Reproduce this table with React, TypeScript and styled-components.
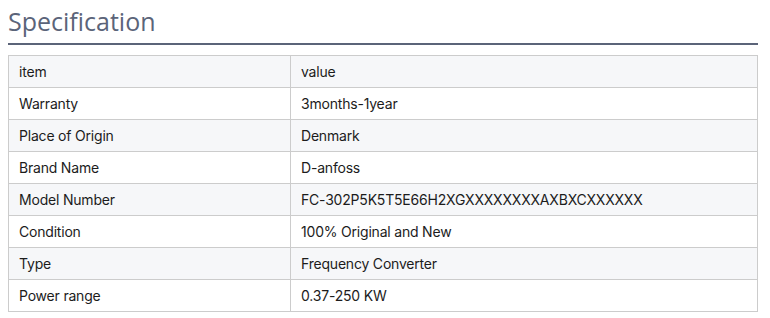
import styled, { createGlobalStyle } from "styled-components"

const rows: [string, string][] = [
  ["item", "value"],
  ["Warranty", "3months-1year"],
  ["Place of Origin", "Denmark"],
  ["Brand Name", "D-anfoss"],
  ["Model Number", "FC-302P5K5T5E66H2XGXXXXXXXXAXBXCXXXXXX"],
  ["Condition", "100% Original and New"],
  ["Type", "Frequency Converter"],
  ["Power range", "0.37-250 KW"],
]

export default function App() {
  return (
    <>
      <GlobalStyle />
      <StyledWrapper>
        <StyledTitle>Specification</StyledTitle>
        <StyledTable>
          <tbody>
            {rows.map(([name, value], i) => (
              <StyledRow key={name} striped={i % 2 === 0}>
                <StyledCell>{name}</StyledCell>
                <StyledCell>{value}</StyledCell>
              </StyledRow>
            ))}
          </tbody>
        </StyledTable>
      </StyledWrapper>
    </>
  )
}

const GlobalStyle = createGlobalStyle`
  body {
    margin: 0;
    background: #fff;
    font-family: Inter, "Noto Sans", sans-serif;
  }
`
const StyledWrapper = styled.div`
  width: 750px;
  padding: 0 8px;
`
const StyledTitle = styled.h2`
  margin: 0 0 10px;
  padding: 3px 0 4px;
  font-family: "Open Sans", "Noto Sans", sans-serif;
  font-weight: 400;
  font-size: 25px;
  line-height: 36px;
  color: #5b6479;
  border-bottom: 2px solid #5b6479;
`
const StyledTable = styled.table`
  width: 100%;
  border-collapse: collapse;
  border: 1px solid #cccccc;
  font-size: 14px;
  letter-spacing: -0.2px;
  color: #1c1c1c;
`
const StyledRow = styled.tr.withConfig({
  shouldForwardProp: (prop) => prop !== "striped",
})<{ striped: boolean }>`
  background: ${({ striped }) => (striped ? "#f6f7f9" : "#ffffff")};
`
const StyledCell = styled.td`
  height: 31px;
  padding: 0 10px;
  border: 1px solid #cccccc;
  vertical-align: middle;

  &:first-child {
    width: 261px;
  }
`
